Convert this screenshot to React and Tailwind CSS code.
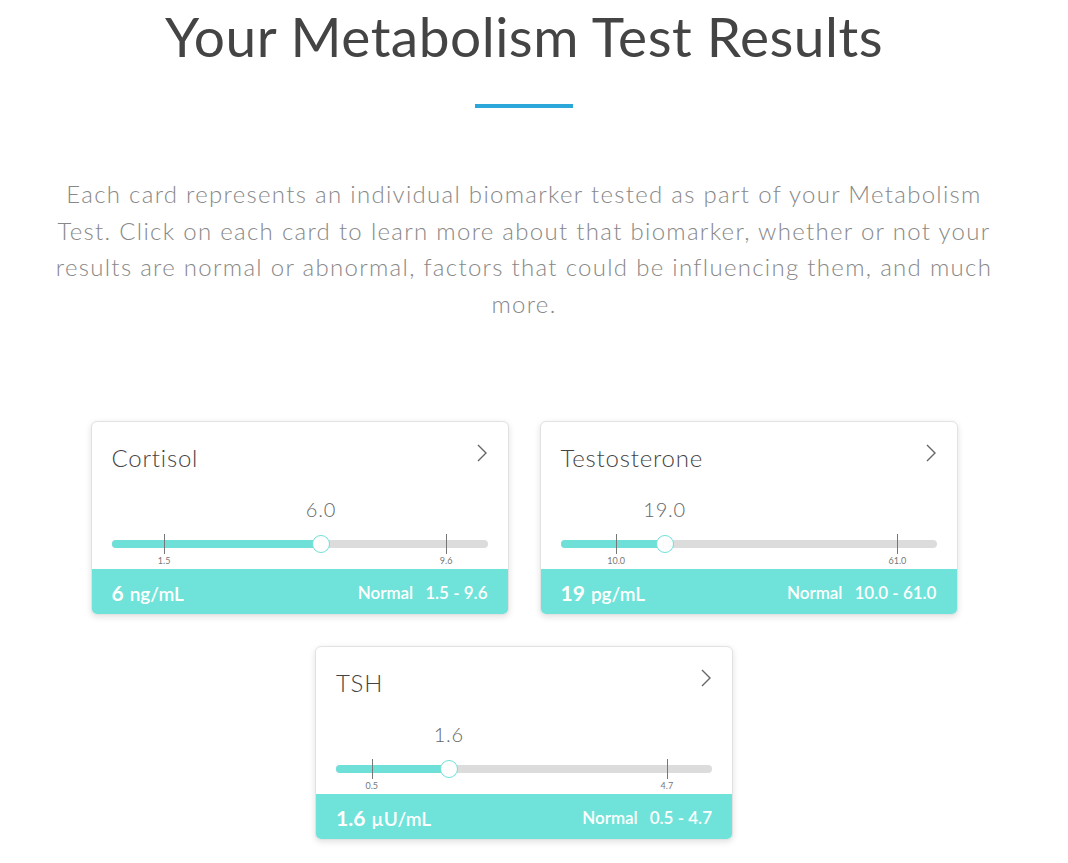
import React from "react";

const cards = [
  { name: "Cortisol", value: "6.0", thumb: 55.7, lo: "1.5", hi: "9.6", loPos: 14, hiPos: 89, big: "6", unit: "ng/mL", range: "1.5 - 9.6" },
  { name: "Testosterone", value: "19.0", thumb: 27.7, lo: "10.0", hi: "61.0", loPos: 14.8, hiPos: 89.6, big: "19", unit: "pg/mL", range: "10.0 - 61.0" },
  { name: "TSH", value: "1.6", thumb: 30, lo: "0.5", hi: "4.7", loPos: 9.5, hiPos: 88, big: "1.6", unit: "µU/mL", range: "0.5 - 4.7" },
];

function Card({ c }) {
  return (
    <div className="w-[418px] h-[194px] rounded-[6px] border border-[#e2e2e2] bg-white shadow-[0_2px_6px_rgba(0,0,0,0.12)] overflow-hidden flex flex-col">
      <div className="flex-1 flex flex-col px-5 pt-5">
        <div className="flex items-start justify-between">
          <div className="text-[24px] leading-8 font-light text-[#444] tracking-[0.8px]">{c.name}</div>
          <svg width="14" height="20" viewBox="0 0 14 20" className="mt-[1px] mr-[-1px]">
            <polyline points="3,2 11,10 3,18" fill="none" stroke="#666" strokeWidth="1.4" />
          </svg>
        </div>
        <div className="relative mt-[66px] h-[8px] rounded-full bg-[#dcdcdc]">
          <div className="absolute left-0 top-0 h-full rounded-full bg-[#6fe0d8]" style={{ width: `${c.thumb}%` }} />
          <div className="absolute top-[-6px] h-[20px] w-px bg-[#777]" style={{ left: `${c.loPos}%` }} />
          <div className="absolute top-[-6px] h-[20px] w-px bg-[#777]" style={{ left: `${c.hiPos}%` }} />
          <div className="absolute top-[16px] -translate-x-1/2 text-[9px] leading-none text-[#777]" style={{ left: `${c.loPos}%` }}>{c.lo}</div>
          <div className="absolute top-[16px] -translate-x-1/2 text-[9px] leading-none text-[#777]" style={{ left: `${c.hiPos}%` }}>{c.hi}</div>
          <div className="absolute top-[-5px] h-[18px] w-[18px] -translate-x-1/2 rounded-full border-[1.5px] border-[#6fe0d8] bg-white" style={{ left: `${c.thumb}%` }} />
          <div className="absolute top-[-43px] -translate-x-1/2 text-[20px] leading-6 font-light text-[#666] tracking-[0.8px]" style={{ left: `${c.thumb}%` }}>{c.value}</div>
        </div>
      </div>
      <div className="h-[45px] bg-[#6fe3d9] flex items-center justify-between px-5 pt-[2px] text-white">
        <div className="flex items-baseline gap-[6px]">
          <span className="text-[21px] font-bold">{c.big}</span>
          <span className="text-[19px] font-semibold">{c.unit}</span>
        </div>
        <div className="flex items-baseline gap-[12px]">
          <span className="text-[17px] font-semibold">Normal</span>
          <span className="text-[17px] font-semibold">{c.range}</span>
        </div>
      </div>
    </div>
  );
}

export default function App() {
  return (
    <div className="w-[1068px] min-h-[863px] bg-white" style={{ fontFamily: "Lato, 'Open Sans', sans-serif" }}>
      <div className="w-[1048px] flex flex-col items-center">
        <h1 className="text-[55px] leading-[72px] text-[#444] tracking-[0.5px]">Your Metabolism Test Results</h1>
        <div className="mt-[32px] h-[4px] w-[98px] bg-[#2ba7d9]" />
        <p className="mt-[68px] w-[950px] text-center text-[24px] leading-[36.6px] font-light text-[#888] tracking-[1.3px]">
          Each card represents an individual biomarker tested as part of your Metabolism Test. Click on each card to learn more about that biomarker, whether or not your results are normal or abnormal, factors that could be influencing them, and much more.
        </p>
        <div className="mt-[99px] w-[868px] flex flex-wrap justify-center gap-x-[31px] gap-y-[31px]">
          {cards.map((c) => (
            <Card key={c.name} c={c} />
          ))}
        </div>
      </div>
    </div>
  );
}
